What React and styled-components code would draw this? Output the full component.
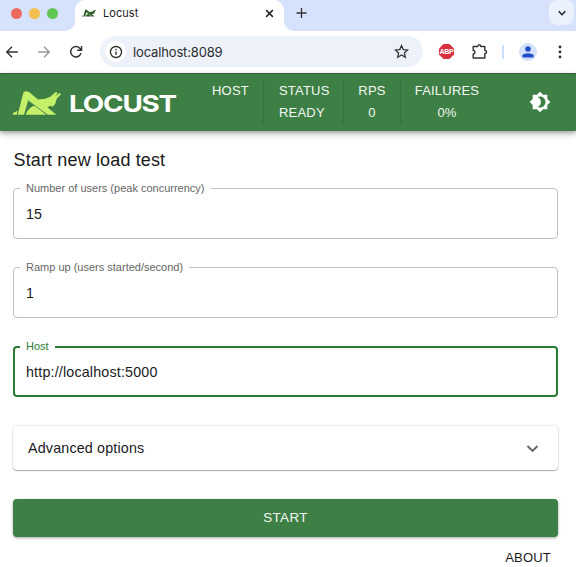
import React from "react";
import styled, { createGlobalStyle } from "styled-components";

const GREEN = "#3e7f45";

const GlobalStyle = createGlobalStyle`
  * { box-sizing: border-box; }
  body {
    margin: 0;
    background: #fff;
    color: #1a1a1a;
    font-family: "Liberation Sans", Arial, sans-serif;
    overflow: hidden;
  }
`;

const Window = styled.div`
  width: 576px;
  height: 567px;
  display: flex;
  flex-direction: column;
  overflow: hidden;
`;

const TabStrip = styled.div`
  height: 31px;
  flex: none;
  display: flex;
  background: #fff;
`;

const StripSide = styled.div`
  display: flex;
  align-items: center;
  background: #d6e1fb;
  width: ${(p) => p.$width || "auto"};
  flex: ${(p) => (p.$grow ? 1 : "none")};
  padding: ${(p) => p.$padding};
  gap: 8px;
  border-radius: ${(p) => p.$radius};
`;

const TabBack = styled.div`
  width: 209px;
  background: linear-gradient(#d6e1fb 0 14px, #fff 14px);
`;

const Tab = styled.div`
  height: 31px;
  display: flex;
  align-items: center;
  padding: 0 10px 5px 7px;
  background: #fff;
  border-radius: 10px 10px 0 0;
  font: 400 11px Inter, sans-serif;
  letter-spacing: 0.05px;
  color: #1a1a1a;
`;

const TabTitle = styled.span`
  flex: 1;
  margin-left: 7px;
`;

const Dot = styled.span`
  width: 11px;
  height: 11px;
  border-radius: 50%;
  background: ${(p) => p.$color};
  margin-right: -1px;
`;

const TabMenu = styled.span`
  width: 25px;
  height: 25px;
  margin-left: auto;
  margin-bottom: 6px;
  border-radius: 8px;
  background: #ebf1fd;
  display: grid;
  place-items: center;
`;

const Toolbar = styled.div`
  height: 42px;
  flex: none;
  display: flex;
  align-items: center;
  padding: 0 14px 1px 5px;
`;

const NavIcons = styled.div`
  width: 95px;
  display: flex;
  align-items: center;
  gap: 18px;
`;

const AddressBar = styled.div`
  width: 323px;
  height: 31px;
  border-radius: 16px;
  background: #edf1f9;
  display: flex;
  align-items: center;
  padding: 0 14px 0 5px;
  font: 13px Inter, sans-serif;
  color: #2a2b2e;
`;

const InfoBadge = styled.span`
  width: 21px;
  height: 21px;
  border-radius: 50%;
  background: #fff;
  display: grid;
  place-items: center;
  margin-right: 7px;
`;

const Url = styled.span`
  flex: 1;
  letter-spacing: -0.15px;
`;

const Extensions = styled.div`
  flex: 1;
  display: flex;
  align-items: center;
  margin-left: 16px;
`;

const AdBlock = styled.span`
  width: 15px;
  height: 15px;
  margin-right: 18px;
  background: #d9303e;
  clip-path: polygon(30% 0, 70% 0, 100% 30%, 100% 70%, 70% 100%, 30% 100%, 0 70%, 0 30%);
  color: #fff;
  font: bold 7px/15px "Liberation Sans", sans-serif;
  letter-spacing: -0.2px;
  text-align: center;
`;

const Separator = styled.span`
  width: 2px;
  height: 14px;
  background: #cfdffb;
  margin: 0 15px 0 14px;
`;

const Avatar = styled.span`
  width: 18px;
  height: 18px;
  margin-right: auto;
  border-radius: 50%;
  background: #d3e1fb;
  display: grid;
  place-items: center;
`;

const AppBar = styled.header`
  height: 58px;
  flex: none;
  border-top: 1px solid #2c6434;
  padding-bottom: 1px;
  display: flex;
  align-items: center;
  background: ${GREEN};
  box-shadow: 0 2px 4px rgba(0, 0, 0, 0.28), 0 4px 8px rgba(0, 0, 0, 0.12);
  color: #f2f8f2;
`;

const Brand = styled.div`
  width: 197px;
  padding: 2px 0 0 13px;
  display: flex;
  align-items: center;
`;

const Stat = styled.div`
  width: ${(p) => p.$width}px;
  height: 44px;
  display: flex;
  flex-direction: column;
  align-items: ${(p) => p.$align || "center"};
  padding-left: ${(p) => p.$inset || 0}px;
  border-right: ${(p) => (p.$last ? 0 : "1px solid #34733b")};
  font-size: 13px;
  line-height: 22px;
  letter-spacing: 0.2px;
  white-space: nowrap;
`;

const ThemeToggle = styled.button`
  border: 0;
  background: none;
  padding: 0;
  margin-left: auto;
  margin-right: 25px;
  width: 22px;
  height: 22px;
  color: #fff;
`;

const Main = styled.main`
  padding: 17px 18px 0 13px;
  display: flex;
  flex-direction: column;
`;

const Title = styled.h1`
  margin: 0 0 10px;
  padding-left: 0.5px;
  height: 24px;
  font-size: 18px;
  line-height: 24px;
  font-weight: 400;
  letter-spacing: 0.14px;
  color: #1a1a1a;
`;

const Field = styled.fieldset`
  margin: 0 0 22px;
  height: 57px;
  min-width: 0;
  border: ${(p) => (p.$focused ? "2px solid #2b7a35" : "1px solid #c0c0c0")};
  border-radius: 4px;
  padding: ${(p) => (p.$focused ? "0 5px" : "0 6px")};
`;

const FieldLabel = styled.legend`
  padding: 0 6px;
  height: 13px;
  font-size: 11px;
  line-height: 13px;
  color: ${(p) => (p.$focused ? "#2b7a35" : "#666")};
`;

const FieldInput = styled.input`
  display: block;
  width: 100%;
  height: 38px;
  padding: 0 6px;
  border: 0;
  outline: 0;
  background: transparent;
  font: 14.3px "Liberation Sans", Arial, sans-serif;
  letter-spacing: 0.17px;
  color: #1a1a1a;
`;

const Accordion = styled.div`
  height: 44px;
  margin-top: 7px;
  padding: 0 18px 0 15px;
  display: flex;
  align-items: center;
  justify-content: space-between;
  border-radius: 4px;
  background: #fff;
  box-shadow: 0 1px 1px rgba(0, 0, 0, 0.28), 0 0 2px rgba(0, 0, 0, 0.25);
  font-size: 14.3px;
  letter-spacing: 0.17px;
`;

const StartButton = styled.button`
  height: 38px;
  margin-top: 29px;
  padding: 0 0 2px;
  border: 0;
  border-radius: 4px;
  background: ${GREEN};
  color: #f4f9f4;
  box-shadow: 0 1px 3px rgba(0, 0, 0, 0.35);
  font: 13.4px "Liberation Sans", Arial, sans-serif;
  letter-spacing: 0.4px;
`;

const About = styled.a`
  align-self: flex-end;
  margin: 11px 7px 0 0;
  font-size: 13px;
  line-height: 19px;
  letter-spacing: 0.2px;
`;

const Icon = ({ size = 16, stroke = "#303030", width = 2, children }) => (
  <svg width={size} height={size} viewBox="0 0 24 24" fill="none" stroke={stroke} strokeWidth={width} display="block">
    {children}
  </svg>
);

const Locust = ({ w, h, color, gap }) => (
  <svg width={w} height={h} viewBox="0 0 144 72" display="block">
    <path d="M0 66 L14 59 L11 71 L0 71 Z" fill={color} />
    <path d="M14 71 L31 5 L38 0 L48 3 L130 71 L103 71 L45 30 L33 71 Z" fill={color} />
    <path
      d="M38 71 L43 60 Q48 52 59 46 L68 44 L100 71 Z M70 28 Q78 24 94 24 L112 17 L121 9 L129 2 L134 7 L125 17 L140 6 L144 10 L131 23 L127 38 L119 47 L111 44 L102 50 L96 53 Z"
      fill={color}
    />
    <path d="M44 28 L106 74" fill="none" stroke={gap} strokeWidth="2.5" />
  </svg>
);

export default function App() {
  return (
    <Window>
      <GlobalStyle />
      <TabStrip>
        <StripSide $width="75px" $padding="0 0 5px 11px" $radius="0 0 10px 0">
          <Dot $color="#ec695e" />
          <Dot $color="#f4bf4f" />
          <Dot $color="#61c654" />
        </StripSide>
        <TabBack>
          <Tab>
            <Locust w={14} h={8} color="#315f2a" gap="#dfe8dc" />
            <TabTitle>Locust</TabTitle>
            <Icon size={9} width={3.8} stroke="#222"><path d="M3 3 21 21M21 3 3 21" /></Icon>
          </Tab>
        </TabBack>
        <StripSide $grow $padding="0 2px 0 12px" $radius="0 0 0 10px">
          <svg width="11" height="31" viewBox="0 0 11 31"><path d="M5.5 8v10M.5 13h10" stroke="#333" strokeWidth="1.3" /></svg>
          <TabMenu>
            <Icon size={10} width={3.6} stroke="#222"><path d="M4 8l8 8 8-8" /></Icon>
          </TabMenu>
        </StripSide>
      </TabStrip>

      <Toolbar>
        <NavIcons>
          <Icon size={14} width={2.4}><path d="M22 12H3M12 3 3 12l9 9" /></Icon>
          <Icon size={14} width={2.4} stroke="#999"><path d="M2 12h19M12 3l9 9-9 9" /></Icon>
          <Icon size={14} width={2.5}><path d="M20.5 14a9 9 0 1 1-2-8.5L21 8M21.5 1.5V9H14" /></Icon>
        </NavIcons>
        <AddressBar>
          <InfoBadge>
            <Icon size={14} width={2.3}><circle cx="12" cy="12" r="9.5" /><path d="M12 11v6M12 6.5v2.5" /></Icon>
          </InfoBadge>
          <Url>localhost:8089</Url>
          <Icon size={15}><path d="M12 2.5l2.8 6.4 7 .7-5.2 4.7 1.5 6.9-6.1-3.6-6.1 3.6 1.5-6.9L2.2 9.6l7-.7z" /></Icon>
        </AddressBar>
        <Extensions>
          <AdBlock>ABP</AdBlock>
          <svg width="16" height="17" viewBox="0 0 16 17" display="block">
            <path d="M1.2 3.5H5.8C5.8 1.1 8.8 1.1 8.8 3.5H12.8V7.4C15.2 7.4 15.2 10.4 12.8 10.4V15H1.2V11.3C3.6 10.8 3.6 7.8 1.2 7.3Z" fill="none" stroke="#303030" strokeWidth="1.4" strokeLinejoin="round" />
          </svg>
          <Separator />
          <Avatar>
            <svg width="12" height="12" viewBox="0 0 12 12" fill="#1f50c8"><circle cx="6" cy="3" r="2.8" /><path d="M.5 11.5V9.3C1.2 6.4 10.8 6.4 11.5 9.3v2.2z" /></svg>
          </Avatar>
          <svg width="4" height="14" viewBox="0 0 4 14" fill="#303030"><circle cx="2" cy="2" r="1.4" /><circle cx="2" cy="7" r="1.4" /><circle cx="2" cy="12" r="1.4" /></svg>
        </Extensions>
      </Toolbar>

      <AppBar>
        <Brand>
          <Locust w={48} h={24} color="#c5f069" gap={GREEN} />
          <svg width="118" height="28" viewBox="0 0 118 28">
            <text x="8" y="23" fill="#fff" fontFamily="Inter" fontWeight="700" fontSize="23.2" letterSpacing="-1" textLength="107" lengthAdjust="spacingAndGlyphs">LOCUST</text>
          </svg>
        </Brand>
        <Stat $width={67} $align="flex-start" $inset={15}><span>HOST</span></Stat>
        <Stat $width={80} $align="flex-start" $inset={15}><span>STATUS</span><span>READY</span></Stat>
        <Stat $width={57}><span>RPS</span><span>0</span></Stat>
        <Stat $width={92} $last><span>FAILURES</span><span>0%</span></Stat>
        <ThemeToggle aria-label="Toggle theme">
          <svg width="22" height="22" viewBox="0 0 24 24" fill="currentColor"><path d="M20 8.69V4h-4.69L12 .69 8.69 4H4v4.69L.69 12 4 15.31V20h4.69L12 23.31 15.31 20H20v-4.69L23.31 12 20 8.69zM12 18c-.89 0-1.74-.2-2.5-.55C11.56 16.5 13 14.42 13 12s-1.44-4.5-3.5-5.45C10.26 6.2 11.11 6 12 6c3.31 0 6 2.69 6 6s-2.69 6-6 6z" /></svg>
        </ThemeToggle>
      </AppBar>

      <Main>
        <Title>Start new load test</Title>
        <Field>
          <FieldLabel>Number of users (peak concurrency)</FieldLabel>
          <FieldInput defaultValue="15" />
        </Field>
        <Field>
          <FieldLabel>Ramp up (users started/second)</FieldLabel>
          <FieldInput defaultValue="1" />
        </Field>
        <Field $focused>
          <FieldLabel $focused>Host</FieldLabel>
          <FieldInput defaultValue="http://localhost:5000" />
        </Field>
        <Accordion>
          <span>Advanced options</span>
          <Icon size={15} width={3} stroke="#666"><path d="M4 8l8 8 8-8" /></Icon>
        </Accordion>
        <StartButton>START</StartButton>
        <About>ABOUT</About>
      </Main>
    </Window>
  );
}
